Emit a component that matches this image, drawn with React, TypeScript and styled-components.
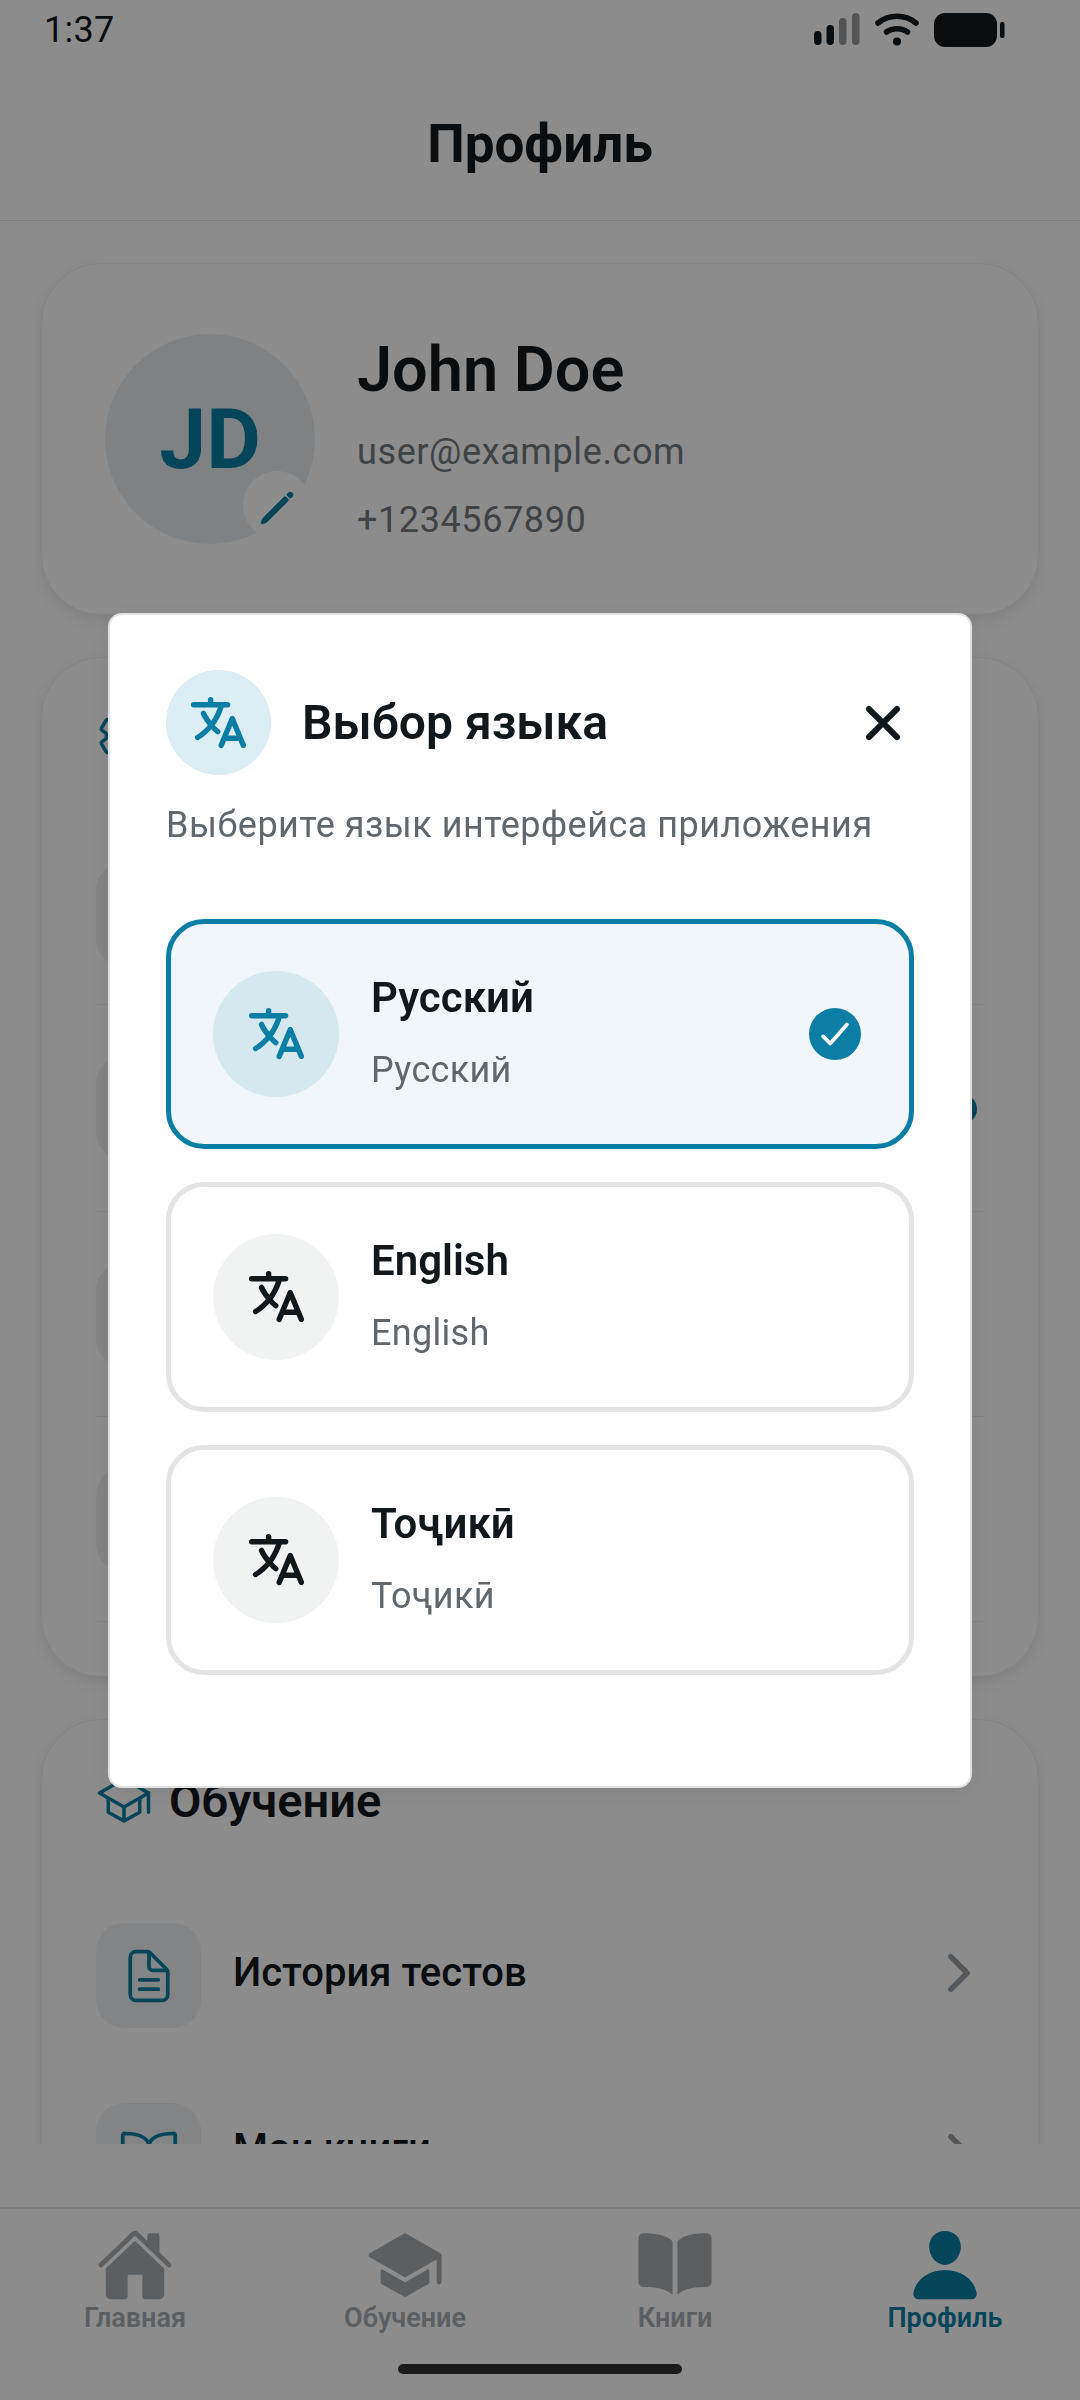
import React from 'react';
import styled, { createGlobalStyle } from 'styled-components';
import {
  IoLanguage, IoClose, IoPencil, IoCheckmark, IoChevronForward, IoDocumentTextOutline,
  IoBookOutline, IoSchoolOutline, IoSettingsOutline, IoHome, IoSchool, IoBook, IoPerson,
} from 'react-icons/io5';

const Global = createGlobalStyle`
  html, body { margin: 0; padding: 0; background: #fff; }
  body { font-family: Roboto, "Noto Sans", sans-serif; color: #11181c; }
  * { box-sizing: border-box; }
`;

const primary = '#0a7ea4';
const muted = '#60686d';
const soft = '#a8adb2';

const Screen = styled.div`
  width: 1080px; height: 2400px; display: flex; flex-direction: column; overflow: hidden; background: #fff;
`;
const StatusBar = styled.div`
  height: 60px; padding: 0 75px 0 44px; display: flex; align-items: center; justify-content: space-between; flex: none;
`;
const Time = styled.span`font-size: 36px; line-height: 60px; letter-spacing: .3px;`;
const StatusIcons = styled.div`display: flex; align-items: center;`;
const Header = styled.header`
  height: 161px; flex: none; display: flex; align-items: center; justify-content: center; padding-top: 8px;
  border-bottom: 1px solid #e6e8ea;
`;
const Title = styled.h1`margin: 0; font-size: 53px; font-weight: 700; line-height: 64px;`;
const Scroll = styled.main`
  height: 1923px; flex: none; overflow: hidden; padding: 42px 41px 0; display: flex; flex-direction: column; gap: 42px;
`;
const Card = styled.section`
  background: #fff; border: 1px solid #eceef0; border-radius: 60px; flex: none;
  box-shadow: 0 6px 14px rgba(0,0,0,.09);
`;
const ProfileCard = styled(Card)`
  height: 352px; padding: 0 63px; display: flex; align-items: center; gap: 42px;
`;
const Avatar = styled.div`
  position: relative; width: 210px; height: 210px; border-radius: 50%; background: #e8edf0; flex: none;
  display: flex; align-items: center; justify-content: center;
  color: ${primary}; font-size: 84px; font-weight: 700;
`;
const EditBadge = styled.div`
  position: absolute; right: 4px; bottom: 5px; width: 68px; height: 68px; border-radius: 50%; background: #fff;
  display: flex; align-items: center; justify-content: center; padding-top: 6px; color: ${primary}; font-size: 40px;
`;
const Info = styled.div`display: flex; flex-direction: column;`;
const Name = styled.div`font-size: 63px; font-weight: 600; line-height: 72px; margin-bottom: 22px;`;
const Meta = styled.div`font-size: 36px; line-height: 48px; color: #737a80; letter-spacing: .6px; margin-bottom: 20px; &:last-child { margin-bottom: 0; }`;

const SectionCard = styled(Card)`padding: 48px 54px 0;`;
const SettingsCard = styled(SectionCard)`height: 1020px;`;
const LearnCard = styled(SectionCard)`padding-top: 50px;`;
const SectionHead = styled.div`
  height: 60px; display: flex; align-items: center; gap: 17px; color: ${primary}; font-size: 56px;
`;
const SectionTitle = styled.h2`margin: 0; font-size: 47px; font-weight: 600; color: #11181c;`;
const SettingsRows = styled.div`margin-top: 96px; display: flex; flex-direction: column;`;
const SettingsRow = styled.div`
  height: 205px; position: relative;
  &:first-child { height: 193px; }
  &:nth-child(2) { height: 207px; }
  &::after { content: ''; position: absolute; left: 0; right: 0; bottom: 50px; height: 1px; background: #eceef0; }
`;
const Tile = styled.div`
  position: absolute; left: 0; top: 0; width: 105px; height: 105px; border-radius: 28px; background: #eef1f4;
  display: flex; align-items: center; justify-content: center; color: ${primary}; font-size: 60px;
`;
const ToggleDot = styled.div`
  position: absolute; right: 7px; top: 39px; width: 30px; height: 30px; border-radius: 50%; background: ${primary};
`;
const LearnRows = styled.div`margin-top: 93px; display: flex; flex-direction: column; gap: 75px;`;
const RowTile = styled(Tile)`position: static; flex: none;`;
const RowLabel = styled.span`flex: 1; font-size: 40px; font-weight: 500; color: #11181c; padding-bottom: 7px;`;
const Chevron = styled.span`color: #9ba1a6; font-size: 58px; display: flex; margin: 0 -4px 5px 0;`;
const LearnRow = styled.div`
  height: 105px; display: flex; align-items: center; gap: 32px;
  & + & ${RowLabel} { padding-bottom: 15px; }
`;

const BottomNav = styled.nav`
  margin-top: 63px; flex: 1; border-top: 2px solid #e3e5e7; display: grid; grid-template-columns: repeat(4, 1fr); position: relative; padding-top: 17px;
`;
const NavItem = styled.div<{ $active?: boolean }>`
  display: flex; flex-direction: column; align-items: center; height: 110px;
  color: ${p => (p.$active ? primary : soft)}; font-size: 78px;
  svg { display: block; }
`;
const NavLabel = styled.span`font-size: 27px; font-weight: 600; line-height: 32px; margin-top: -2px;`;
const HomeBar = styled.div`
  position: absolute; left: 398px; bottom: 26px; width: 284px; height: 10px; border-radius: 5px; background: #333;
`;

const Overlay = styled.div`
  position: fixed; left: 0; top: 0; width: 1080px; height: 2400px; background: rgba(0,0,0,.45);
  display: flex; align-items: center; justify-content: center;
`;
const Modal = styled.div`
  width: 864px; height: 1175px; background: #fff; border: 2px solid #e2e2e2; border-radius: 14px; padding: 57px 56px 0;
  box-shadow: 0 6px 24px rgba(0,0,0,.08);
`;
const ModalHead = styled.div`display: flex; align-items: center; gap: 31px;`;
const ModalIcon = styled.div`
  width: 105px; height: 105px; border-radius: 50%; background: #dcedf3; color: ${primary}; font-size: 63px;
  display: flex; align-items: center; justify-content: center; flex: none; margin: -2px 0 0;
`;
const ModalTitle = styled.h2`margin: 0; flex: 1; font-size: 48px; font-weight: 600; line-height: 60px;`;
const CloseBtn = styled.button`
  border: 0; background: none; padding: 0; color: #11181c; font-size: 64px; display: flex; margin-right: -1px;
`;
const Sub = styled.p`margin: 26px 0 70px; font-size: 36px; line-height: 48px; color: ${muted}; letter-spacing: .5px;`;
const LangList = styled.div`display: flex; flex-direction: column; gap: 33px;`;
const LangCard = styled.div<{ $active?: boolean }>`
  height: 230px; border: 5px solid ${p => (p.$active ? primary : '#e2e4e5')}; border-radius: 38px;
  background: ${p => (p.$active ? '#f0f6f9' : '#fff')};
  padding: 0 42px; display: flex; align-items: center; gap: 32px;
`;
const LangIcon = styled.div<{ $active?: boolean }>`
  width: 126px; height: 126px; border-radius: 50%; flex: none;
  background: ${p => (p.$active ? '#d5e8ef' : '#f1f2f2')};
  color: ${p => (p.$active ? primary : '#11181c')}; font-size: 63px;
  display: flex; align-items: center; justify-content: center;
`;
const LangText = styled.div`flex: 1; display: flex; flex-direction: column; gap: 24px; padding-top: 1px;`;
const LangName = styled.div`font-size: 42px; font-weight: 600; line-height: 48px;`;
const LangSub = styled.div`font-size: 36px; line-height: 48px; color: ${muted}; letter-spacing: .3px;`;
const Check = styled.div`
  width: 52px; height: 52px; border-radius: 50%; background: ${primary}; color: #fff; font-size: 38px;
  display: flex; align-items: center; justify-content: center; margin-right: 6px;
  svg path { stroke-width: 50; }
`;

const Signal = () => (
  <svg width="46" height="34" viewBox="0 0 46 34" style={{ marginRight: 15 }}>
    <rect x="0" y="18" width="7.5" height="14" rx="3.7" fill="#11181c" />
    <rect x="12.5" y="12" width="7.5" height="20" rx="3.7" fill="#11181c" />
    <rect x="25" y="5" width="7.5" height="27" rx="3.7" fill="#11181c" opacity=".45" />
    <rect x="38" y="0" width="7.5" height="32" rx="3.7" fill="#11181c" opacity=".45" />
  </svg>
);
const Wifi = () => (
  <svg width="44" height="34" viewBox="0 0 44 34" style={{ marginRight: 15 }} fill="none" stroke="#11181c" strokeWidth="5.5" strokeLinecap="round">
    <path d="M3 10C14 1 30 1 41 10" />
    <path d="M11.5 19C17 14.5 27 14.5 32.5 19" />
    <circle cx="22" cy="28.5" r="4" fill="#11181c" stroke="none" />
  </svg>
);
const Battery = () => (
  <svg width="71" height="36" viewBox="0 0 71 36">
    <rect x="0" y="1" width="63" height="34" rx="11" fill="#11181c" />
    <rect x="66" y="10" width="4.5" height="16" rx="2" fill="#11181c" />
  </svg>
);

const langs = [
  { name: 'Русский', active: true },
  { name: 'English' },
  { name: 'Тоҷикӣ' },
];

export default function App() {
  return (
    <Screen>
      <Global />
      <StatusBar>
        <Time>1:37</Time>
        <StatusIcons><Signal /><Wifi /><Battery /></StatusIcons>
      </StatusBar>
      <Header><Title>Профиль</Title></Header>
      <Scroll>
        <ProfileCard>
          <Avatar>
            JD
            <EditBadge><IoPencil /></EditBadge>
          </Avatar>
          <Info>
            <Name>John Doe</Name>
            <Meta>user@example.com</Meta>
            <Meta>+1234567890</Meta>
          </Info>
        </ProfileCard>
        <SettingsCard>
          <SectionHead><IoSettingsOutline /></SectionHead>
          <SettingsRows>
            {[0, 1, 2, 3].map(i => (
              <SettingsRow key={i}>
                <Tile />
                {i === 1 && <ToggleDot />}
              </SettingsRow>
            ))}
          </SettingsRows>
        </SettingsCard>
        <LearnCard>
          <SectionHead><IoSchoolOutline /><SectionTitle>Обучение</SectionTitle></SectionHead>
          <LearnRows>
            <LearnRow>
              <RowTile><IoDocumentTextOutline /></RowTile>
              <RowLabel>История тестов</RowLabel>
              <Chevron><IoChevronForward /></Chevron>
            </LearnRow>
            <LearnRow>
              <RowTile><IoBookOutline /></RowTile>
              <RowLabel>Мои книги</RowLabel>
              <Chevron><IoChevronForward /></Chevron>
            </LearnRow>
          </LearnRows>
        </LearnCard>
      </Scroll>
      <BottomNav>
        <NavItem><IoHome /><NavLabel>Главная</NavLabel></NavItem>
        <NavItem><IoSchool /><NavLabel>Обучение</NavLabel></NavItem>
        <NavItem><IoBook /><NavLabel>Книги</NavLabel></NavItem>
        <NavItem $active><IoPerson /><NavLabel>Профиль</NavLabel></NavItem>
        <HomeBar />
      </BottomNav>
      <Overlay>
        <Modal>
          <ModalHead>
            <ModalIcon><IoLanguage /></ModalIcon>
            <ModalTitle>Выбор языка</ModalTitle>
            <CloseBtn><IoClose /></CloseBtn>
          </ModalHead>
          <Sub>Выберите язык интерфейса приложения</Sub>
          <LangList>
            {langs.map(l => (
              <LangCard key={l.name} $active={l.active}>
                <LangIcon $active={l.active}><IoLanguage /></LangIcon>
                <LangText>
                  <LangName>{l.name}</LangName>
                  <LangSub>{l.name}</LangSub>
                </LangText>
                {l.active && <Check><IoCheckmark /></Check>}
              </LangCard>
            ))}
          </LangList>
        </Modal>
      </Overlay>
    </Screen>
  );
}
